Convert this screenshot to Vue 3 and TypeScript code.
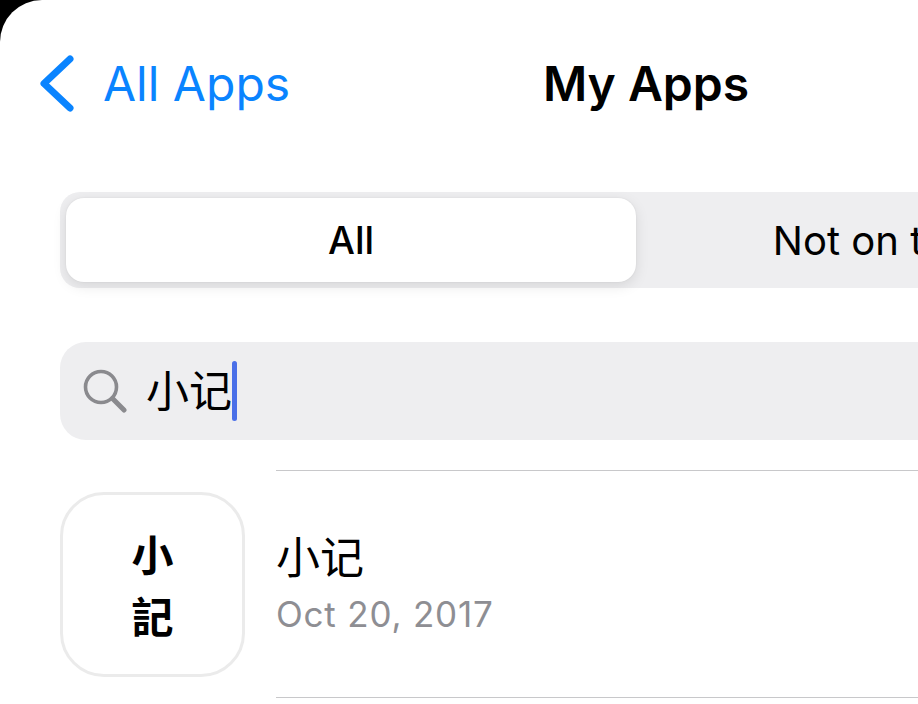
<script setup lang="ts">
const tabs = [
  { label: 'All', active: true },
  { label: 'Not on this iPad', active: false },
]

const apps = [{ name: '小记', date: 'Oct 20, 2017' }]
</script>

<template>
  <div class="sheet">
    <header class="nav">
      <a class="back">
        <svg class="chevron" viewBox="0 0 34 58" width="34" height="58" aria-hidden="true">
          <path d="M30 4 L4 28.5 L30 53" fill="none" stroke="#0a84ff" stroke-width="7" stroke-linecap="round" stroke-linejoin="round" />
        </svg>
        <span>All Apps</span>
      </a>
      <h1 class="title">My Apps</h1>
    </header>

    <div class="segments">
      <div v-for="tab in tabs" :key="tab.label" class="segment" :class="{ active: tab.active }">{{ tab.label }}</div>
    </div>

    <div class="search">
      <svg class="glass" viewBox="0 0 44 44" width="44" height="44" aria-hidden="true">
        <circle cx="18" cy="18" r="15.5" fill="none" stroke="#8a8a8e" stroke-width="3.6" />
        <path d="M29.5 29.5 L41 41" fill="none" stroke="#8a8a8e" stroke-width="5" stroke-linecap="round" />
      </svg>
      <span class="query">小记</span>
      <span class="caret"></span>
    </div>

    <ul class="list">
      <li v-for="app in apps" :key="app.name" class="row">
        <div class="icon">
          <span>小</span>
          <span>記</span>
        </div>
        <div class="info">
          <div class="name">{{ app.name }}</div>
          <div class="date">{{ app.date }}</div>
        </div>
      </li>
    </ul>
  </div>
</template>

<style scoped>
.sheet {
  width: 1292px;
  height: 704px;
  box-sizing: border-box;
  padding: 0 60px;
  background: #fff;
  border-top-left-radius: 42px;
  font-family: Inter, "Noto Sans CJK SC", sans-serif;
  color: #000;
}

.nav {
  position: relative;
  display: flex;
  align-items: center;
  justify-content: center;
  height: 170px;
}

.back {
  position: absolute;
  left: -20px;
  top: 55px;
  display: flex;
  align-items: center;
  gap: 29px;
  color: #0a84ff;
  font-size: 48px;
  line-height: 58px;
}

.title {
  margin: 0;
  font-size: 48px;
  font-weight: 600;
  line-height: 58px;
  transform: translateY(-1px);
}

.segments {
  display: grid;
  grid-template-columns: 570px 1fr;
  height: 96px;
  margin-top: 22px;
  padding: 6px;
  box-sizing: border-box;
  border-radius: 20px;
  background: #eeeef0;
}

.segment {
  display: flex;
  align-items: center;
  justify-content: center;
  padding-right: 18px;
  font-size: 40px;
}

.segment.active {
  padding-right: 0;
  border-radius: 18px;
  background: #fff;
  font-size: 38px;
  font-weight: 500;
  box-shadow: 0 4px 14px rgba(0, 0, 0, 0.1), 0 0 2px rgba(0, 0, 0, 0.08);
}

.search {
  display: flex;
  align-items: center;
  height: 98px;
  margin-top: 54px;
  padding-left: 23px;
  border-radius: 26px;
  background: #eeeef0;
}

.glass {
  flex: none;
}

.query {
  margin-left: 19px;
  font-size: 43px;
  font-weight: 400;
  line-height: 60px;
}

.caret {
  width: 5px;
  height: 60px;
  border-radius: 3px;
  background: #4a6fe8;
}

.list {
  margin: 30px 0 0;
  padding: 0;
  list-style: none;
}

.row {
  display: flex;
  align-items: center;
  height: 226px;
  position: relative;
}

.row::before,
.row::after {
  content: "";
  position: absolute;
  left: 216px;
  right: -60px;
  height: 1px;
  background: #c8c8ca;
}

.row::before {
  top: 0;
}

.row::after {
  top: 227px;
}

.icon {
  flex: none;
  display: flex;
  flex-direction: column;
  align-items: center;
  justify-content: center;
  gap: 10px;
  width: 185px;
  height: 185px;
  margin-top: 2px;
  box-sizing: border-box;
  border: 3px solid #ebebeb;
  border-radius: 44px;
  font-family: "Noto Sans CJK TC", serif;
  font-size: 42px;
  font-weight: 700;
  line-height: 52px;
}

.info {
  margin-left: 31px;
}

.name {
  font-size: 44px;
  font-weight: 400;
  line-height: 58px;
  transform: translateY(-3px);
}

.date {
  margin-top: 3px;
  color: #8e8e93;
  font-size: 35px;
  letter-spacing: 0.8px;
  line-height: 42px;
}
</style>

<style>
html,
body {
  margin: 0;
  overflow: hidden;
  background: #000;
}
</style>
